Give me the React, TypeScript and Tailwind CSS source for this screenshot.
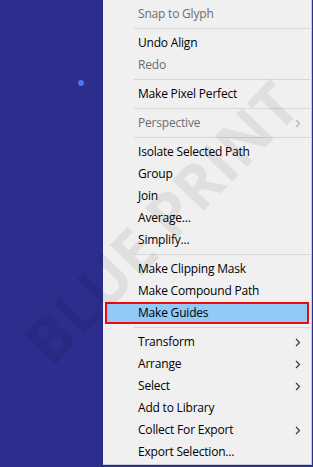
import React from "react";

type Item =
  | { type: "sep" }
  | { type: "item"; label: string; disabled?: boolean; sub?: boolean; selected?: boolean };

const items: Item[] = [
  { type: "item", label: "Snap to Glyph", disabled: true },
  { type: "sep" },
  { type: "item", label: "Undo Align" },
  { type: "item", label: "Redo", disabled: true },
  { type: "sep" },
  { type: "item", label: "Make Pixel Perfect" },
  { type: "sep" },
  { type: "item", label: "Perspective", disabled: true, sub: true },
  { type: "sep" },
  { type: "item", label: "Isolate Selected Path" },
  { type: "item", label: "Group" },
  { type: "item", label: "Join" },
  { type: "item", label: "Average..." },
  { type: "item", label: "Simplify..." },
  { type: "sep" },
  { type: "item", label: "Make Clipping Mask" },
  { type: "item", label: "Make Compound Path" },
  { type: "item", label: "Make Guides", selected: true },
  { type: "sep" },
  { type: "item", label: "Transform", sub: true },
  { type: "item", label: "Arrange", sub: true },
  { type: "item", label: "Select", sub: true },
  { type: "item", label: "Add to Library" },
  { type: "item", label: "Collect For Export", sub: true },
  { type: "item", label: "Export Selection..." },
];

function Chevron({ disabled }: { disabled?: boolean }) {
  return (
    <svg width="6" height="9" viewBox="0 0 6 9" className="shrink-0">
      <path
        d="M1 1 L4.5 4.5 L1 8"
        fill="none"
        stroke={disabled ? "#b4b4b4" : "#3c3c3c"}
        strokeWidth="1.2"
      />
    </svg>
  );
}

export default function App() {
  return (
    <div
      className="relative w-[313px] h-[467px] overflow-hidden bg-[#2c2d8d] flex"
      style={{ fontFamily: '"Open Sans", "Noto Sans", sans-serif' }}
    >
      <div className="relative w-[103px] shrink-0">
        <div className="absolute left-[78px] top-[80px] w-[6px] h-[6px] rounded-full bg-[#4f74f2]" />
      </div>
      <div className="w-[209px] h-[465px] shrink-0 bg-[#f0f0f0] border-r border-b border-[#cccccc] pt-[3px] pb-[1px] flex flex-col">
        {items.map((it, i) =>
          it.type === "sep" ? (
            <div key={i} className="h-[7px] flex items-center pl-[31px] pr-[1px]">
              <div className="h-px w-full bg-[#d7d7d7]" />
            </div>
          ) : it.selected ? (
            <div
              key={i}
              className="h-[22px] mx-[2px] border-2 border-[#ee0a0a] bg-[#91c9f7] flex items-center pl-[31px] pr-[8px] text-[12px] tracking-[-0.2px] text-black"
            >
              <span className="flex-1">{it.label}</span>
            </div>
          ) : (
            <div
              key={i}
              className={
                "h-[22px] flex items-center pl-[35px] pr-[10px] text-[12px] tracking-[-0.2px] " +
                (it.disabled ? "text-[#6d6d6d]" : "text-black")
              }
            >
              <span className="flex-1">{it.label}</span>
              {it.sub && <Chevron disabled={it.disabled} />}
            </div>
          )
        )}
      </div>
      <div
        className="pointer-events-none absolute left-[160px] top-[222px] whitespace-nowrap text-[62px] font-bold tracking-[0px] text-black/[0.07] leading-none"
        style={{
          transform: "translate(-50%, -50%) rotate(-46deg)",
          fontFamily: '"Open Sans", "Noto Sans", sans-serif',
        }}
      >
        BLUE PRINT
      </div>
    </div>
  );
}
